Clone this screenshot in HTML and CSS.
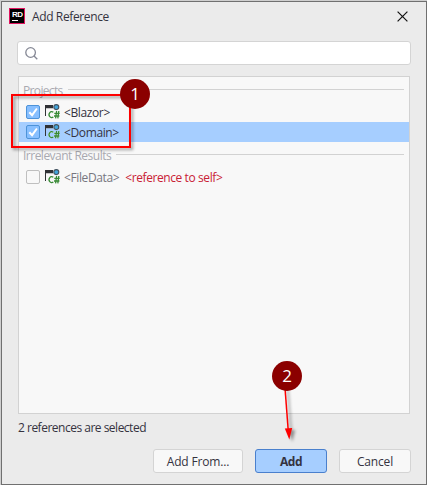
FILE: index.html
```
<!DOCTYPE html>
<html lang="en">
<head>
<meta charset="utf-8">
<title>Add Reference</title>
<link rel="stylesheet" href="styles.css">
</head>
<body>
<svg class="defs" width="0" height="0" aria-hidden="true">
  <symbol id="csproj" viewBox="0 0 16 16">
    <path d="M0 1h8v3.2H1V12H0z" fill="#303236"/>
    <circle cx="11.3" cy="3.1" r="2.5" fill="#42a5dc" stroke="#44525e" stroke-width="1.1"/>
    <path d="M8.3 8.3A2.6 3 0 1 0 8.3 13M11.6 7l-1 7.3M13.8 7l-1 7.3M9.3 9.3h5.4M9 12h5.4" fill="none" stroke="#388a35" stroke-width="1.3"/>
  </symbol>
</svg>
<main class="window">
  <header class="titlebar">
    <div class="logo"><span>RD</span><i></i></div>
    <h1><span class="t-title">Add Reference</span></h1>
    <svg class="close" width="11" height="11" viewBox="0 0 11 11"><path d="M.6.6l9.8 9.8M10.4.6L.6 10.4" stroke="#111" stroke-width="1.2"/></svg>
  </header>
  <div class="search">
    <svg width="13" height="13" viewBox="0 0 13 13" fill="none" stroke="#858895" stroke-width="1.3"><circle cx="5.6" cy="5.5" r="4.8"/><path d="M9 9l3.3 3.3"/></svg>
  </div>
  <section class="list">
    <div class="group"><span class="t-projects">Projects</span><hr></div>
    <div class="row">
      <span class="check on"><svg viewBox="0 0 14 14"><path d="M3.3 7.2l2.8 3 4.8-6.7" fill="none" stroke="#fff" stroke-width="2"/></svg></span>
      <svg class="icon"><use href="#csproj"/></svg>
      <span class="t-blazor">&lt;Blazor&gt;</span>
    </div>
    <div class="row selected">
      <span class="check on"><svg viewBox="0 0 14 14"><path d="M3.3 7.2l2.8 3 4.8-6.7" fill="none" stroke="#fff" stroke-width="2"/></svg></span>
      <svg class="icon"><use href="#csproj"/></svg>
      <span class="t-domain">&lt;Domain&gt;</span>
    </div>
    <div class="group"><span class="t-irr">Irrelevant Results</span><hr></div>
    <div class="row muted">
      <span class="check"></span>
      <svg class="icon"><use href="#csproj"/></svg>
      <span class="t-file">&lt;FileData&gt;</span>
      <span class="self">&lt;reference to self&gt;</span>
    </div>
  </section>
  <p class="status">2 references are selected</p>
  <footer>
    <button class="from">Add From...</button>
    <button class="primary">Add</button>
    <button class="cancel">Cancel</button>
  </footer>
</main>
<div class="highlight"></div>
<svg class="arrow" width="24" height="60" viewBox="0 0 24 60"><path d="M8 2l3.2 42" stroke="#f00" stroke-width="1.5"/><path d="M7.8 42.5l7.4-.6-2.9 11.6z" fill="#f00"/></svg>
<div class="badge one">1</div>
<div class="badge two">2</div>
</body>
</html>
```
FILE: styles.css
```
* { box-sizing: border-box; }
body {
  margin: 0;
  width: 427px;
  height: 485px;
  padding: 1px 0 0 1px;
  overflow: hidden;
  background: #cfcfcf;
  font: 12px/20px "Open Sans", "Noto Sans", sans-serif;
  color: #35333f;
}
.defs { position: absolute; }
.window {
  width: 426px;
  height: 484px;
  border: 1px solid #707070;
  background: #ebebeb;
  display: flex;
  flex-direction: column;
  padding: 0 15px;
}
.titlebar {
  height: 28px;
  margin: 0 -8px;
  padding: 0 9px 0 0;
  display: flex;
  align-items: center;
  flex: none;
}
.logo {
  width: 16px;
  height: 16px;
  background: #000;
  border: 1px solid #e0145f;
  color: #fff;
  font: bold 8px/8px "Liberation Sans", sans-serif;
  padding: 2px 0 0 2px;
  letter-spacing: -.6px;
}
.logo span { display: block; height: 8px; }
.logo i { display: block; width: 6px; height: 1px; margin-top: 1px; background: #fff; }
h1 { margin: 1px auto 0 7px; font: inherit; }
.t-title { letter-spacing: -.38px; }
.close { margin-right: 2px; }
.search {
  height: 24px;
  margin-top: 11px;
  background: #fff;
  border: 1px solid #d4d4d4;
  border-radius: 3px;
  padding: 5px 7px;
  display: flex;
  flex: none;
}
.list {
  margin: 11px 1px 0;
  height: 338px;
  flex: none;
  border: 1px solid #d2d2d2;
  background: #f8f8f8;
}
.group {
  height: 25px;
  padding: 3px 5px 0 4px;
  display: flex;
  color: #a9a9b0;
}
.group span { padding-top: 1px; }
.t-projects { letter-spacing: -.65px; }
.t-irr { letter-spacing: -.51px; }
.group hr {
  flex: 1;
  margin: 9px 0 0 5px;
  border: 0;
  height: 1px;
  background: #d2d2d2;
}
.row {
  height: 20px;
  padding-left: 7px;
  display: flex;
  align-items: center;
  white-space: nowrap;
  letter-spacing: -.38px;
}
.row > span:not(.check) { padding-top: 2px; }
.selected { background: #a6ceff; }
.selected .icon { filter: drop-shadow(0 0 .7px #fff); }
.muted { color: #77767f; }
.check {
  width: 14px;
  height: 14px;
  border: 1px solid #bfbfbf;
  border-radius: 2px;
  flex: none;
}
.check svg { display: block; width: 14px; height: 14px; margin: -1px; }
.on { background: #87bfff; border-color: #4d93d9; }
.icon { width: 16px; height: 16px; margin: 0 3px 0 5px; flex: none; }
.self { margin-left: 6px; color: #c92035; letter-spacing: -.41px; }
.status { margin: 4px 0 0 1px; height: 20px; letter-spacing: -.5px; }
footer {
  display: flex;
  justify-content: flex-end;
  gap: 12px;
  margin-top: 11px;
}
button {
  height: 24px;
  width: 72px;
  padding: 1px 0 0;
  border: 1px solid #d4d4d4;
  border-radius: 3px;
  background: #f8f8f8;
  color: inherit;
  font: inherit;
  letter-spacing: -.15px;
}
.from { width: 90px; }
.primary { background: #a6ceff; border-color: #4a80cd; font-weight: bold; letter-spacing: -.5px; }
.highlight {
  position: absolute;
  left: 11px;
  top: 94px;
  width: 120px;
  height: 54px;
  border: 2px solid #f00;
  filter: drop-shadow(2px 2px 1.5px rgba(0, 0, 0, .4));
}
.badge {
  position: absolute;
  width: 30px;
  height: 30px;
  border-radius: 50%;
  background: #8b0000;
  color: #fff;
  font: 17px/29px "Open Sans", sans-serif;
  text-align: center;
}
.one { left: 120px; top: 79px; }
.two { left: 272px; top: 361px; }
.arrow {
  position: absolute;
  left: 277px;
  top: 386px;
  filter: drop-shadow(3px 2px 1.5px rgba(0, 0, 0, .4));
}
```
